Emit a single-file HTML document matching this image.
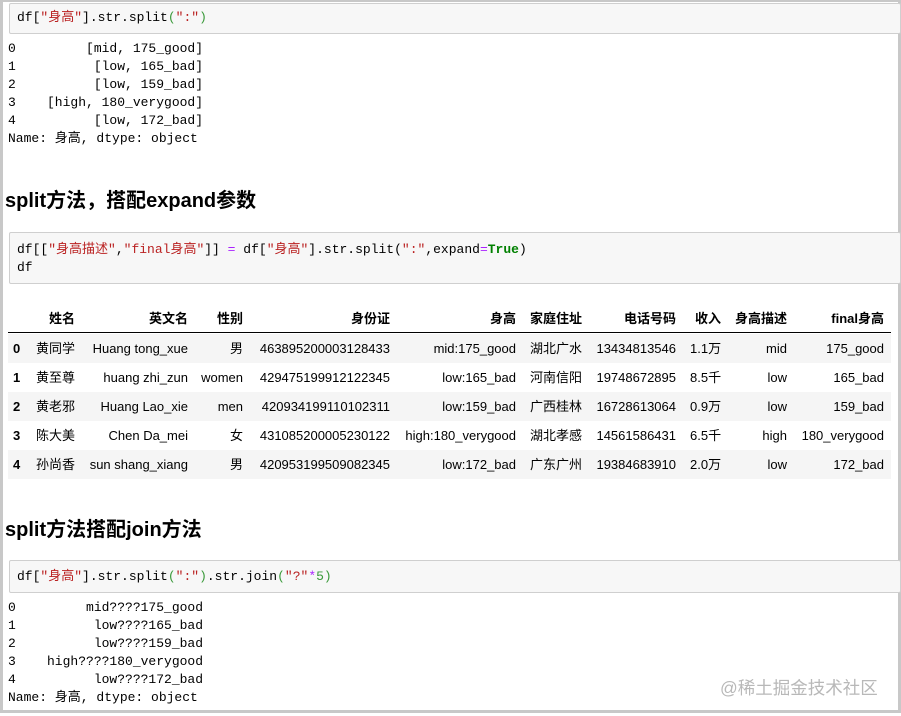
<!DOCTYPE html>
<html><head><meta charset="utf-8"><style>
html,body{margin:0;padding:0;width:901px;height:716px;background:#fff;overflow:hidden}
body{position:relative;font-family:"Liberation Sans","Noto Sans CJK SC",sans-serif}
.frame{position:absolute;left:0;top:0;width:895px;height:708px;border:3px solid #c8c8c8;border-top:2px solid #c8c8c8}
.code{position:absolute;left:9px;width:892px;background:#f7f7f7;border:1px solid #cfcfcf;box-sizing:border-box;border-radius:2px}
.mono{font-family:"Liberation Mono","Noto Sans CJK SC",monospace;font-size:13px;white-space:pre;line-height:18px;color:#000}
.code .mono{position:absolute;left:7px}
.s{color:#ba2121}.g{color:#3a9a3a}.o{color:#aa22ff}.k{color:#008000;font-weight:bold}
.out{position:absolute;left:8px}
h2{position:absolute;left:5px;margin:0;font-size:20px;font-weight:bold;color:#000;line-height:24px}
.row{position:absolute;left:8px;width:883px;height:29px}
.c{position:absolute;font-size:13px;color:#000;white-space:nowrap;line-height:29px}
.hd .c{font-weight:bold}
.wm{position:absolute;left:720px;top:675px;font-size:17.5px;color:#b8b8b8;font-family:"Liberation Sans","Noto Sans CJK SC",sans-serif}
</style></head><body>
<div class="frame"></div>

<div class="code" style="top:3px;height:31px"><div class="mono" style="top:5px">df[<span class="s">"身高"</span>].str.split<span class="g">(</span><span class="s">":"</span><span class="g">)</span></div></div>
<div class="out mono" style="top:40px">0         [mid, 175_good]
1          [low, 165_bad]
2          [low, 159_bad]
3    [high, 180_verygood]
4          [low, 172_bad]
Name: 身高, dtype: object</div>

<h2 style="top:189px">split方法，搭配expand参数</h2>

<div class="code" style="top:232px;height:52px"><div class="mono" style="top:8px">df[[<span class="s">"身高描述"</span>,<span class="s">"final身高"</span>]] <span class="o">=</span> df[<span class="s">"身高"</span>].str.split(<span class="s">":"</span>,expand<span class="o">=</span><span class="k">True</span>)
df</div></div>

<div class="row hd" style="top:304px;border-bottom:1px solid #000;height:28px">
<span class="c" style="right:816px">姓名</span><span class="c" style="right:703px">英文名</span><span class="c" style="right:648px">性别</span><span class="c" style="right:501px">身份证</span><span class="c" style="right:375px">身高</span><span class="c" style="right:309px">家庭住址</span><span class="c" style="right:215px">电话号码</span><span class="c" style="right:170px">收入</span><span class="c" style="right:104px">身高描述</span><span class="c" style="right:7px">final身高</span></div>

<div class="row" style="top:334px;background:#f5f5f5">
<span class="c" style="left:5px;font-weight:bold">0</span><span class="c" style="right:816px">黄同学</span><span class="c" style="right:703px">Huang tong_xue</span><span class="c" style="right:648px">男</span><span class="c" style="right:501px">463895200003128433</span><span class="c" style="right:375px">mid:175_good</span><span class="c" style="right:309px">湖北广水</span><span class="c" style="right:215px">13434813546</span><span class="c" style="left:682px">1.1万</span><span class="c" style="right:104px">mid</span><span class="c" style="right:7px">175_good</span></div>
<div class="row" style="top:363px">
<span class="c" style="left:5px;font-weight:bold">1</span><span class="c" style="right:816px">黄至尊</span><span class="c" style="right:703px">huang zhi_zun</span><span class="c" style="right:648px">women</span><span class="c" style="right:501px">429475199912122345</span><span class="c" style="right:375px">low:165_bad</span><span class="c" style="right:309px">河南信阳</span><span class="c" style="right:215px">19748672895</span><span class="c" style="left:682px">8.5千</span><span class="c" style="right:104px">low</span><span class="c" style="right:7px">165_bad</span></div>
<div class="row" style="top:392px;background:#f5f5f5">
<span class="c" style="left:5px;font-weight:bold">2</span><span class="c" style="right:816px">黄老邪</span><span class="c" style="right:703px">Huang Lao_xie</span><span class="c" style="right:648px">men</span><span class="c" style="right:501px">420934199110102311</span><span class="c" style="right:375px">low:159_bad</span><span class="c" style="right:309px">广西桂林</span><span class="c" style="right:215px">16728613064</span><span class="c" style="left:682px">0.9万</span><span class="c" style="right:104px">low</span><span class="c" style="right:7px">159_bad</span></div>
<div class="row" style="top:421px">
<span class="c" style="left:5px;font-weight:bold">3</span><span class="c" style="right:816px">陈大美</span><span class="c" style="right:703px">Chen Da_mei</span><span class="c" style="right:648px">女</span><span class="c" style="right:501px">431085200005230122</span><span class="c" style="right:375px">high:180_verygood</span><span class="c" style="right:309px">湖北孝感</span><span class="c" style="right:215px">14561586431</span><span class="c" style="left:682px">6.5千</span><span class="c" style="right:104px">high</span><span class="c" style="right:7px">180_verygood</span></div>
<div class="row" style="top:450px;background:#f5f5f5">
<span class="c" style="left:5px;font-weight:bold">4</span><span class="c" style="right:816px">孙尚香</span><span class="c" style="right:703px">sun shang_xiang</span><span class="c" style="right:648px">男</span><span class="c" style="right:501px">420953199509082345</span><span class="c" style="right:375px">low:172_bad</span><span class="c" style="right:309px">广东广州</span><span class="c" style="right:215px">19384683910</span><span class="c" style="left:682px">2.0万</span><span class="c" style="right:104px">low</span><span class="c" style="right:7px">172_bad</span></div>

<h2 style="top:518px">split方法搭配join方法</h2>

<div class="code" style="top:560px;height:33px"><div class="mono" style="top:7px">df[<span class="s">"身高"</span>].str.split<span class="g">(</span><span class="s">":"</span><span class="g">)</span>.str.join<span class="g">(</span><span class="s">"?"</span><span class="o">*</span><span class="g">5)</span></div></div>
<div class="out mono" style="top:599px">0         mid????175_good
1          low????165_bad
2          low????159_bad
3    high????180_verygood
4          low????172_bad
Name: 身高, dtype: object</div>

<div class="wm">@稀土掘金技术社区</div>
</body></html>
